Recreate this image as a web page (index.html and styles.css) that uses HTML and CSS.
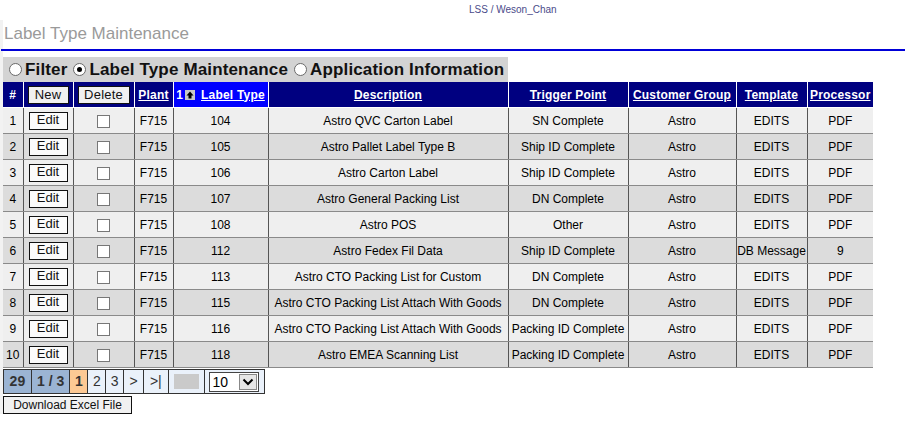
FILE: index.html
```html
<!DOCTYPE html>
<html>
<head>
<meta charset="utf-8">
<link rel="stylesheet" href="styles.css">
</head>
<body>
<div class="user">LSS / Weson_Chan</div>
<div class="page">
  <div class="title">Label Type Maintenance</div>
  <div class="rule"></div>
  <div class="tabs">
    <span class="radio"></span><span class="tab">Filter</span>
    <span class="radio on"></span><span class="tab">Label Type Maintenance</span>
    <span class="radio"></span><span class="tab">Application Information</span>
  </div>
  <table class="grid">
    <colgroup>
      <col class="c1"><col class="c2"><col class="c3"><col class="c4"><col class="c5"><col class="c6"><col class="c7"><col class="c8"><col class="c9"><col class="c10">
    </colgroup>
    <thead>
      <tr>
        <th>#</th>
        <th><span class="btn hbtn">New</span></th>
        <th><span class="btn hbtn del">Delete</span></th>
        <th><a>Plant</a></th>
        <th class="sorted">1<span class="sorticon"><svg width="10" height="10" viewBox="0 0 10 10"><rect width="10" height="10" fill="#c8c8c8"/><path d="M5 1.5 L8.5 5.5 L6.5 5.5 L6.5 8.5 L3.5 8.5 L3.5 5.5 L1.5 5.5 Z" fill="#000"/></svg></span><a>Label Type</a></th>
        <th><a>Description</a></th>
        <th><a>Trigger Point</a></th>
        <th><a>Customer Group</a></th>
        <th><a>Template</a></th>
        <th><a>Processor</a></th>
      </tr>
    </thead>
    <tbody>
      <tr class="odd"><td>1</td><td><span class="btn edit">Edit</span></td><td><span class="chk"></span></td><td>F715</td><td>104</td><td>Astro QVC Carton Label</td><td>SN Complete</td><td>Astro</td><td>EDITS</td><td>PDF</td></tr>
      <tr class="even"><td>2</td><td><span class="btn edit">Edit</span></td><td><span class="chk"></span></td><td>F715</td><td>105</td><td>Astro Pallet Label Type B</td><td>Ship ID Complete</td><td>Astro</td><td>EDITS</td><td>PDF</td></tr>
      <tr class="odd"><td>3</td><td><span class="btn edit">Edit</span></td><td><span class="chk"></span></td><td>F715</td><td>106</td><td>Astro Carton Label</td><td>Ship ID Complete</td><td>Astro</td><td>EDITS</td><td>PDF</td></tr>
      <tr class="even"><td>4</td><td><span class="btn edit">Edit</span></td><td><span class="chk"></span></td><td>F715</td><td>107</td><td>Astro General Packing List</td><td>DN Complete</td><td>Astro</td><td>EDITS</td><td>PDF</td></tr>
      <tr class="odd"><td>5</td><td><span class="btn edit">Edit</span></td><td><span class="chk"></span></td><td>F715</td><td>108</td><td>Astro POS</td><td>Other</td><td>Astro</td><td>EDITS</td><td>PDF</td></tr>
      <tr class="even"><td>6</td><td><span class="btn edit">Edit</span></td><td><span class="chk"></span></td><td>F715</td><td>112</td><td>Astro Fedex Fil Data</td><td>Ship ID Complete</td><td>Astro</td><td>DB Message</td><td>9</td></tr>
      <tr class="odd"><td>7</td><td><span class="btn edit">Edit</span></td><td><span class="chk"></span></td><td>F715</td><td>113</td><td>Astro CTO Packing List for Custom</td><td>DN Complete</td><td>Astro</td><td>EDITS</td><td>PDF</td></tr>
      <tr class="even"><td>8</td><td><span class="btn edit">Edit</span></td><td><span class="chk"></span></td><td>F715</td><td>115</td><td>Astro CTO Packing List Attach With Goods</td><td>DN Complete</td><td>Astro</td><td>EDITS</td><td>PDF</td></tr>
      <tr class="odd"><td>9</td><td><span class="btn edit">Edit</span></td><td><span class="chk"></span></td><td>F715</td><td>116</td><td>Astro CTO Packing List Attach With Goods</td><td>Packing ID Complete</td><td>Astro</td><td>EDITS</td><td>PDF</td></tr>
      <tr class="even"><td>10</td><td><span class="btn edit">Edit</span></td><td><span class="chk"></span></td><td>F715</td><td>118</td><td>Astro EMEA Scanning List</td><td>Packing ID Complete</td><td>Astro</td><td>EDITS</td><td>PDF</td></tr>
    </tbody>
  </table>
  <div class="pager">
    <span class="pc info w29">29</span>
    <span class="pc info w13">1 / 3</span>
    <span class="pc cur">1</span>
    <span class="pc">2</span>
    <span class="pc">3</span>
    <span class="pc nav">&gt;</span>
    <span class="pc nav2">&gt;|</span>
    <span class="pc blank"><span class="graybox"></span></span>
    <span class="pc selcell"><span class="sel"><span class="selval">10</span><span class="selbtn"><svg width="12" height="8" viewBox="0 0 12 8"><path d="M1.5 1.5 L6 6 L10.5 1.5" fill="none" stroke="#000" stroke-width="2"/></svg></span></span></span>
  </div>
  <div class="dl"><span class="btn dlbtn">Download Excel File</span></div>
</div>
</body>
</html>
```
FILE: styles.css
```css
html, body {
  margin: 0;
  padding: 0;
  background: #fff;
  font-family: "Liberation Sans", Arial, sans-serif;
}
.user {
  height: 20px;
  line-height: 19px;
  padding-left: 469px;
  font-size: 10px;
  color: #4b4b8a;
}
.page {
  border-left: 3px solid #f2f2f2;
}
.title {
  height: 29px;
  line-height: 28px;
  font-size: 17px;
  color: #9a9a9a;
  padding-left: 1px;
}
.rule {
  height: 2px;
  background: #0000d8;
  margin-left: -2px;
}
.tabs {
  margin-top: 6px;
  width: 505px;
  height: 25px;
  background: #d3d3d3;
  display: flex;
  align-items: center;
  font-size: 17px;
  font-weight: bold;
  color: #111;
  white-space: nowrap;
}
.radio {
  flex: none;
  display: inline-block;
  width: 11px;
  height: 11px;
  border: 1px solid #6a6a6a;
  border-radius: 50%;
  background: #fff;
  margin: 0 3px 0 6px;
  position: relative;
}
.radio:first-child { margin-left: 6px; }
.radio.on::after {
  content: "";
  position: absolute;
  left: 3px;
  top: 3px;
  width: 5px;
  height: 5px;
  border-radius: 50%;
  background: #000;
}
.tab { flex: none; letter-spacing: 0.15px; }
.grid {
  border-collapse: collapse;
  table-layout: fixed;
  width: 870px;
  font-size: 12px;
}
.c1 { width: 20px; }
.c2 { width: 50px; }
.c3 { width: 61px; }
.c4 { width: 39px; }
.c5 { width: 95px; }
.c6 { width: 240px; }
.c7 { width: 120px; }
.c8 { width: 108px; }
.c9 { width: 71px; }
.c10 { width: 66px; }
.grid th {
  background: #000080;
  color: #fff;
  height: 25px;
  padding: 0;
  border: 1px solid #fff;
  border-top: none;
  font-size: 12px;
  font-weight: bold;
  text-align: center;
  white-space: nowrap;
  letter-spacing: 0.2px;
}
.grid th:first-child { border-left: none; }
.grid th:last-child { border-right: none; }
.grid th a { text-decoration: underline; color: #fff; }
.grid th.sorted { background: #0000ff; }
.sorticon {
  display: inline-block;
  vertical-align: -1px;
  margin: 0 6px 0 2px;
  line-height: 0;
}
.grid td {
  height: 24px;
  padding: 1px 0 0 0;
  border-left: 1px solid #555;
  border-right: 1px solid #555;
  border-bottom: 1px solid #8a8a8a;
  text-align: center;
  white-space: nowrap;
  color: #000;
}
.grid td:first-child { border-left: none; }
.grid td:last-child { border-right: none; }
.grid tr.odd td { background: #efefef; }
.grid tr.even td { background: #dcdcdc; }
.btn {
  display: inline-block;
  box-sizing: border-box;
  border: 1px solid #111;
  background: #f0f0f0;
  font-size: 13px;
  color: #111;
  text-align: center;
  vertical-align: middle;
}
.hbtn {
  height: 18px;
  line-height: 16px;
  width: 41px;
  font-weight: normal;
}
.hbtn.del { width: 52px; }
.edit {
  width: 39px;
  height: 18px;
  line-height: 14px;
  background: #fbfbfb;
}
.chk {
  display: inline-block;
  width: 11px;
  height: 11px;
  border: 1px solid #777;
  background: #fff;
  vertical-align: middle;
}
.pager {
  margin-top: 1px;
  display: flex;
  width: 260px;
  height: 23px;
  border: 1px solid #333;
  font-size: 14px;
  color: #333;
}
.pc {
  box-sizing: border-box;
  height: 23px;
  line-height: 23px;
  width: 18px;
  text-align: center;
  background: #eaf1fa;
  border-left: 1px solid #333;
}
.pc:first-child { border-left: none; }
.pc.info {
  background: #9bb4d3;
  font-weight: bold;
}
.w29 { width: 27px; }
.w13 { width: 39px; }
.pc.cur { background: #fdc994; font-weight: bold; }
.pc.nav { width: 20px; }
.pc.nav2 { width: 25px; }
.pc.blank {
  width: 37px;
  display: flex;
  align-items: center;
  justify-content: center;
}
.graybox {
  display: block;
  width: 25px;
  height: 15px;
  background: #cacaca;
}
.pc.selcell {
  width: 60px;
  display: flex;
  align-items: center;
  padding-left: 4px;
}
.sel {
  display: flex;
  box-sizing: border-box;
  width: 50px;
  height: 20px;
  border: 1px solid #444;
  background: #fff;
}
.selval {
  flex: 1;
  text-align: left;
  padding-left: 2px;
  line-height: 18px;
  font-size: 14px;
  color: #000;
}
.selbtn {
  width: 18px;
  height: 16px;
  margin: 1px;
  box-sizing: border-box;
  border: 1px solid #888;
  background: #e6e6e6;
  display: flex;
  align-items: center;
  justify-content: center;
}
.dl { margin-top: 1px; }
.dlbtn {
  width: 129px;
  height: 18px;
  line-height: 16px;
  font-size: 12px;
  background: #f1f1f1;
}
```
